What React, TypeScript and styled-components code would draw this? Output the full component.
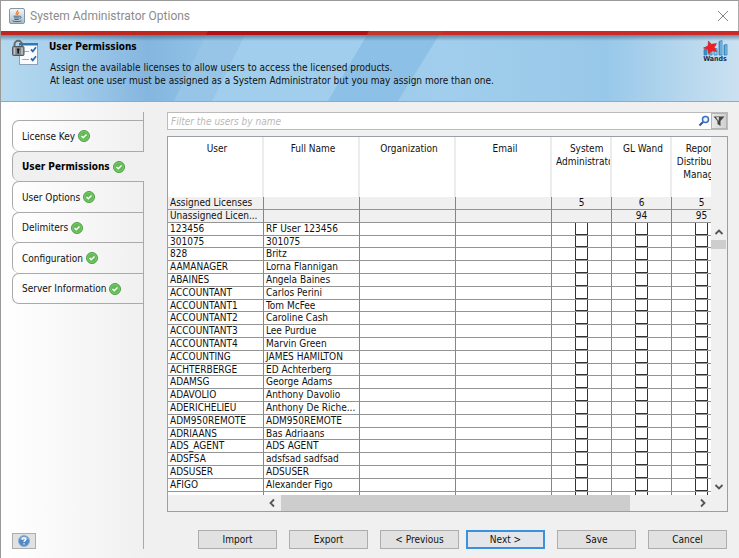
import React from 'react';
import styled, { createGlobalStyle, css } from 'styled-components';

const GlobalStyle = createGlobalStyle`
  * { box-sizing: border-box; }
  html, body, #root { height: 100%; }
  body { margin: 0; background: #f0f0f0; }
  body, button, input, table {
    font-family: 'DejaVu Sans Condensed', 'Noto Sans', sans-serif;
    font-size: 10px;
    color: #111;
  }
`;

const Window = styled.div`
  display: flex;
  flex-direction: column;
  min-height: 100%;
  border-left: 1px solid #999;
  background: #f0f0f0;
`;

const TitleBar = styled.header`
  display: flex;
  align-items: center;
  height: 31px;
  padding: 0 9px 0 8px;
  gap: 5px;
  border-top: 1px solid #999;
  border-right: 1px solid #aaa;
  background: #fff;
`;

const Title = styled.h1`
  flex: 1;
  margin: 0;
  font: 400 12px Roboto, 'Noto Sans', sans-serif;
  color: #8c8c8c;
`;

const IconButton = styled.button`
  display: flex;
  align-items: center;
  justify-content: center;
  padding: 0;
  border: 0;
  background: none;
`;

const Banner = styled.section`
  position: relative;
  display: flex;
  align-items: flex-start;
  height: 71px;
  padding: 8px 11px 0 11px;
  border-bottom: 1px solid #96a8bd;
`;

const BannerArt = styled.svg`
  position: absolute;
  inset: 0;
  width: 100%;
  height: 100%;
`;

const BannerText = styled.div`
  position: relative;
  flex: 1;
  padding-left: 10px;
`;

const BannerTitle = styled.h2`
  margin: 0 0 7px;
  font-size: 10px;
  line-height: 15px;
  color: #000;
`;

const BannerLine = styled.p`
  margin: 0 0 0 1px;
  line-height: 13px;
`;

const BannerIcon = styled.svg`
  position: relative;
  flex: none;
`;

const Body = styled.main`
  display: flex;
  flex: 1;
`;

const Sidebar = styled.aside`
  display: flex;
  width: 143px;
  padding: 10px 0 9px 11px;
  background: linear-gradient(90deg, #fff, #f0f0f0);
`;

const SideInner = styled.div`
  display: flex;
  flex-direction: column;
  justify-content: space-between;
  flex: 1;
  padding-top: 8px;
  border-right: 1px solid #aaa;
`;

const TabList = styled.nav`
  display: flex;
  flex-direction: column;
`;

const Tab = styled.button<{ $active?: boolean }>`
  display: flex;
  align-items: center;
  gap: 3px;
  height: 31px;
  padding: 0 0 0 9px;
  border: 1px solid #aaa;
  border-right: 0;
  border-bottom-width: 0;
  border-radius: 7px 0 0 7px;
  background: linear-gradient(90deg, #fff, #f0f0f0);
  &:nth-child(even) { height: 30px; }
  &:last-child { height: 31px; border-bottom-width: 1px; }
  ${({ $active }) => $active && css`
    margin-right: -1px;
    background: #f0f0f0;
    font-weight: 700;
    color: #000;
  `}
`;

const HelpButton = styled(IconButton)`
  width: 24px;
  height: 16px;
  border: 1px solid #adadad;
  background: #e1e1e1;
`;

const Content = styled.section`
  display: flex;
  flex-direction: column;
  flex: 1;
  min-width: 0;
  padding: 10px 11px 9px 23px;
`;

const FilterBar = styled.div`
  display: flex;
  align-items: center;
  height: 18px;
  border: 1px solid #bbb;
  background: #fff;
`;

const FilterInput = styled.input`
  flex: 1;
  min-width: 0;
  padding: 0 3px;
  border: 0;
  outline: 0;
  background: none;
  &::placeholder { color: #b8b8b8; font-style: italic; opacity: 1; }
`;

const FilterButton = styled(IconButton)`
  width: 16px;
  height: 16px;
  border: 1px solid #b4b4b4;
  margin-left: 1px;
  background: linear-gradient(90deg, #e8e8e8, #d0d0d0);
`;

const TablePanel = styled.div`
  display: grid;
  grid-template-columns: minmax(0, 1fr) 16px;
  grid-template-rows: minmax(0, 1fr) 16px;
  flex: 1;
  margin-top: 6px;
  border: 1px solid #9a9ea6;
`;

const Viewport = styled.div`
  overflow: hidden;
  height: 358px;
  background: #fff;
`;

const Table = styled.table`
  width: 564px;
  table-layout: fixed;
  border-collapse: separate;
  border-spacing: 0;
`;

const HeadCell = styled.th`
  height: 60px;
  padding: 5px 0 0 4px;
  border-right: 2px solid #ececec;
  overflow: hidden;
  vertical-align: top;
  font-weight: 400;
  line-height: 13px;
`;

const HeadLabel = styled.div`
  width: max-content;
  min-width: 100%;
  text-align: center;
  white-space: pre-line;
`;

const Row = styled.tr<{ $summary?: boolean }>`
  height: 13px;
  background: ${({ $summary }) => ($summary ? '#f0f0f0' : '#fff')};
  &:nth-child(5n + 4) { height: 12px; }
  &:nth-child(5n + 4) td { height: 12px; line-height: 11px; }
`;

const Cell = styled.td<{ $center?: boolean }>`
  height: 13px;
  padding: ${({ $center }) => ($center ? '0' : '0 1px 0 2px')};
  border-right: 1px solid #858585;
  border-bottom: 1px solid #949494;
  overflow: hidden;
  text-align: ${({ $center }) => ($center ? 'center' : 'left')};
  text-overflow: ellipsis;
  white-space: nowrap;
  line-height: 12px;
`;

const Check = styled.input`
  display: block;
  appearance: none;
  width: 13px;
  height: 12px;
  margin: 0 auto;
  border: solid #333;
  border-width: 0 1px 1px;
  tr:nth-child(5n + 4) & { height: 11px; }
`;

const VScroll = styled.div`
  display: flex;
  flex-direction: column;
  justify-content: space-between;
  padding-top: 87px;
`;

const HScroll = styled.div`
  display: flex;
  justify-content: space-between;
  padding-left: 96px;
`;

const ScrollButton = styled(IconButton)`
  width: 16px;
  height: 16px;
`;

const VThumb = styled.div`
  height: 9px;
  margin-right: 1px;
  margin-bottom: auto;
  background: #cdcdcd;
`;

const HThumb = styled.div`
  flex: 0 1 349px;
  margin-left: 1px;
  margin-right: auto;
  background: #cdcdcd;
`;

const Footer = styled.footer`
  display: flex;
  justify-content: flex-end;
  gap: 12px;
  padding: 18px 1px 0 0;
`;

const WizardPair = styled.div`
  display: flex;
  gap: 7px;
`;

const Button = styled.button<{ $primary?: boolean }>`
  width: 79px;
  height: 19px;
  padding: 0;
  border: ${({ $primary }) => ($primary ? '2px solid #3a92dc' : '1px solid #adadad')};
  background: ${({ $primary }) => ($primary ? '#e3e7eb' : '#e1e1e1')};
`;

const JavaIcon = () => (
  <svg width="16" height="16" viewBox="0 0 16 16" aria-hidden="true">
    <defs>
      <linearGradient id="cup" x2="0" y2="1"><stop stopColor="#f6f8fa" /><stop offset="1" stopColor="#a9bccb" /></linearGradient>
    </defs>
    <rect x=".5" y=".5" width="15" height="15" rx="1.5" fill="url(#cup)" stroke="#8597a5" />
    <path d="M8.800 2c.6 1.600-3 2.400-1.400 5M10 4.200c-1.600.9-1.800 1.400-1.200 2.800" fill="none" stroke="#ec8035" strokeWidth="1.200" />
    <path d="M4.500 8.200h6.200M5 9.900h5.200M5.400 11.500h4.300M10.700 8.300c2.200-.2 1.700 2-.3 2.400M3.500 12.900c2 1 7 .9 9-.1" fill="none" stroke="#3f6684" />
  </svg>
);

const LockListIcon = () => (
  <BannerIcon width="27" height="27" viewBox="0 0 27 27" aria-hidden="true">
    <rect x="7.500" y="4.500" width="18" height="21" fill="#fafcff" stroke="#8ba0b5" />
    <path d="M7 4h19v2.500H7z" fill="#2d79b9" />
    <path d="M11 12.500h6M10 20.500h7" stroke="#a2adba" />
    <path d="m19 10.500 1.800 1.800 3.200-4M19 19.500l1.800 1.800 3.200-4" fill="none" stroke="#2f6ba9" strokeWidth="1.800" />
    <path d="M2.500 8V5.500a3.700 3.700 0 0 1 7.500 0V8" fill="none" stroke="#66696e" strokeWidth="2" />
    <rect x=".5" y="7.500" width="11.500" height="9" rx="1" fill="#80848b" stroke="#53575e" />
    <path d="M2.500 8.500v7M10 8.500v7" stroke="#c2c5ca" strokeWidth="1.500" />
    <path d="M6.200 9.500v5M5 10.500h2.500" stroke="#171717" strokeWidth="1.600" />
  </BannerIcon>
);

const WandsIcon = () => (
  <BannerIcon width="26" height="24" viewBox="0 0 26 24" role="img" aria-label="Wands">
    <defs>
      <linearGradient id="bar" x2="1" y2="0"><stop stopColor="#2b86c2" /><stop offset="1" stopColor="#a4d5f2" /></linearGradient>
    </defs>
    <g stroke="#3484bc" strokeWidth=".8" fill="url(#bar)">
      <path d="M2 10.500h3v5.500H2zM7 11.500h3V16H7zM12 9.500h3V16h-3z" />
      <path d="M17 2.500l3-1V16h-3z" /><path d="M22 6l3-.5V16h-3z" />
    </g>
    <path d="m6.500 2 2.700 3.300 5.300-.8-2.200 4 2.500 4-4.800-.7-3.500 3-.7-4.500L1.500 9l4.500-2z" fill="#ee2022" stroke="#bc2028" strokeWidth=".6" />
    <text x="13" y="22" textAnchor="middle" fontFamily="DejaVu Sans Condensed, sans-serif" fontWeight="700" fontSize="7" fill="#17334d">Wands</text>
  </BannerIcon>
);

const TickIcon = () => (
  <svg width="12" height="12" viewBox="0 0 12 12" aria-hidden="true">
    <circle cx="6" cy="6" r="5.500" fill="#62ba55" stroke="#4d9e45" />
    <circle cx="6" cy="6" r="4.500" fill="none" stroke="#86cf78" strokeWidth=".7" />
    <path d="m3.500 6 1.800 1.800L8.500 4.500" fill="none" stroke="#fff" strokeWidth="1.500" />
  </svg>
);

const HelpIcon = () => (
  <svg width="12" height="12" viewBox="0 0 12 12" aria-hidden="true">
    <circle cx="6" cy="6" r="5.500" fill="#4f8ac5" stroke="#8fb1d4" />
    <path d="M2 4a4.500 4.500 0 0 1 8 0c-2 1.500-6 1.500-8 0z" fill="#9cc1e6" />
    <path d="M4.300 4.500c.1-2.200 3.400-2 3.400 0C7.700 5.700 6 5.800 6 7M6 8.200v1.300" fill="none" stroke="#fff" strokeWidth="1.300" />
  </svg>
);

const Chevron = ({ d }: { d: string }) => (
  <svg width="10" height="10" viewBox="0 0 10 10" aria-hidden="true">
    <path d={d} fill="none" stroke="#555" strokeWidth="1.800" />
  </svg>
);

const tabs = ['License Key', 'User Permissions', 'User Options', 'Delimiters', 'Configuration', 'Server Information'];

const columns = ['User', 'Full Name', 'Organization', 'Email', 'System\nAdministrator', 'GL Wand', 'Reports\nDistribution\nManager'];
const columnWidths = [96, 96, 96, 96, 60, 60, 60];

const users = [
  ['123456', 'RF User 123456'], ['301075', '301075'], ['828', 'Britz'],
  ['AAMANAGER', 'Lorna Flannigan'], ['ABAINES', 'Angela Baines'],
  ['ACCOUNTANT', 'Carlos Perini'], ['ACCOUNTANT1', 'Tom McFee'],
  ['ACCOUNTANT2', 'Caroline Cash'], ['ACCOUNTANT3', 'Lee Purdue'],
  ['ACCOUNTANT4', 'Marvin Green'], ['ACCOUNTING', 'JAMES HAMILTON'],
  ['ACHTERBERGE', 'ED Achterberg'], ['ADAMSG', 'George Adams'],
  ['ADAVOLIO', 'Anthony Davolio'], ['ADERICHELIEU', 'Anthony De Riche...'],
  ['ADM950REMOTE', 'ADM950REMOTE'], ['ADRIAANS', 'Bas Adriaans'],
  ['ADS_AGENT', 'ADS AGENT'], ['ADSFSA', 'adsfsad sadfsad'],
  ['ADSUSER', 'ADSUSER'], ['AFIGO', 'Alexander Figo'], ['', ''],
];

const summaries = [
  ['Assigned Licenses', '5', '6', '5'],
  ['Unassigned Licen...', '', '94', '95'],
];

const licenses = ['System Administrator', 'GL Wand', 'Reports Distribution Manager'];

export default function App() {
  return (
    <>
      <GlobalStyle />
      <Window>
        <TitleBar>
          <JavaIcon />
          <Title>System Administrator Options</Title>
          <IconButton aria-label="Close">
            <svg width="12" height="12" viewBox="0 0 12 12"><path d="m1 1 10 10M11 1 1 11" stroke="#858585" /></svg>
          </IconButton>
        </TitleBar>
        <Banner>
          <BannerArt viewBox="0 0 738 70" preserveAspectRatio="none" aria-hidden="true">
            <defs>
              <linearGradient id="sky">
                <stop stopColor="#b6d9ef" />
                <stop offset=".08" stopColor="#a6cfec" />
                <stop offset=".2" stopColor="#85b6df" />
                <stop offset=".28" stopColor="#91c2e6" />
                <stop offset=".6" stopColor="#a1ceec" />
                <stop offset=".82" stopColor="#98c8e9" />
                <stop offset="1" stopColor="#cbe1f1" />
              </linearGradient>
              <linearGradient id="shade" x2="0" y2="1">
                <stop stopColor="#315b78" stopOpacity=".6" />
                <stop offset="1" stopColor="#315b78" stopOpacity="0" />
              </linearGradient>
            </defs>
            <path d="M0 0h738v70H0z" fill="url(#sky)" />
            <path d="M205 4h39l-33 66h-38z" fill="#96c5e8" />
            <path d="M244 4h122l-39 66H211z" fill="#a0ceec" />
            <path d="M366 4h72l-41 66h-70z" fill="#8dc0e6" />
            <path d="M0 4h738v6H0z" fill="url(#shade)" />
            <path d="M0 0h738v4H0z" fill="#cb2a28" />
            <path d="M0 0h207l-2 4H0z" fill="#c0281f" />
            <path d="M207 0h161l-2 4H205z" fill="#b31116" />
            <path d="M368 0h75l-2 4h-75z" fill="#c53429" />
          </BannerArt>
          <LockListIcon />
          <BannerText>
            <BannerTitle>User Permissions</BannerTitle>
            <BannerLine>Assign the available licenses to allow users to access the licensed products.</BannerLine>
            <BannerLine>At least one user must be assigned as a System Administrator but you may assign more than one.</BannerLine>
          </BannerText>
          <WandsIcon />
        </Banner>
        <Body>
          <Sidebar>
            <SideInner>
              <TabList>
                {tabs.map((name, i) => (
                  <Tab key={name} $active={i === 1} aria-current={i === 1 ? 'page' : undefined}>
                    {name}<TickIcon />
                  </Tab>
                ))}
              </TabList>
              <HelpButton aria-label="Help"><HelpIcon /></HelpButton>
            </SideInner>
          </Sidebar>
          <Content>
            <FilterBar>
              <FilterInput aria-label="Filter users" placeholder="Filter the users by name" />
              <IconButton aria-label="Search">
                <svg width="12" height="12" viewBox="0 0 12 12">
                  <circle cx="7.500" cy="4.500" r="3" fill="#eef6ff" stroke="#3a6fc0" strokeWidth="1.500" />
                  <path d="M5 7 1.500 10.500" stroke="#2d579c" strokeWidth="2" />
                </svg>
              </IconButton>
              <FilterButton aria-label="Filter options">
                <svg width="12" height="12" viewBox="0 0 12 12">
                  <path d="M.5 1.500h11L7.500 6v5l-3-2V6z" fill="#444" />
                  <path d="M3 2.300h3L5.500 6z" fill="#eee" />
                </svg>
              </FilterButton>
            </FilterBar>
            <TablePanel>
              <Viewport>
                <Table>
                  <colgroup>{columnWidths.map((w, i) => <col key={i} width={w} />)}</colgroup>
                  <thead>
                    <tr>{columns.map((name) => <HeadCell key={name} scope="col"><HeadLabel>{name}</HeadLabel></HeadCell>)}</tr>
                  </thead>
                  <tbody>
                    {summaries.map(([label, ...counts]) => (
                      <Row key={label} $summary>
                        <Cell>{label}</Cell><Cell /><Cell /><Cell />
                        {counts.map((count, i) => <Cell key={i} $center>{count}</Cell>)}
                      </Row>
                    ))}
                    {users.map(([user, name]) => (
                      <Row key={user}>
                        <Cell>{user}</Cell><Cell>{name}</Cell><Cell /><Cell />
                        {licenses.map((license) => (
                          <Cell key={license} $center><Check type="checkbox" aria-label={`${license}: ${user}`} /></Cell>
                        ))}
                      </Row>
                    ))}
                  </tbody>
                </Table>
              </Viewport>
              <VScroll>
                <ScrollButton aria-label="Scroll up"><Chevron d="m1.500 7 3.500-3.500L8.500 7" /></ScrollButton>
                <VThumb />
                <ScrollButton aria-label="Scroll down"><Chevron d="m1.500 3 3.500 3.500L8.500 3" /></ScrollButton>
              </VScroll>
              <HScroll>
                <ScrollButton aria-label="Scroll left"><Chevron d="M7 1.500 3.500 5 7 8.500" /></ScrollButton>
                <HThumb />
                <ScrollButton aria-label="Scroll right"><Chevron d="M3 1.500 6.500 5 3 8.500" /></ScrollButton>
              </HScroll>
            </TablePanel>
            <Footer>
              <Button>Import</Button>
              <Button>Export</Button>
              <WizardPair>
                <Button>&lt; Previous</Button>
                <Button $primary>Next &gt;</Button>
              </WizardPair>
              <Button>Save</Button>
              <Button>Cancel</Button>
            </Footer>
          </Content>
        </Body>
      </Window>
    </>
  );
}
